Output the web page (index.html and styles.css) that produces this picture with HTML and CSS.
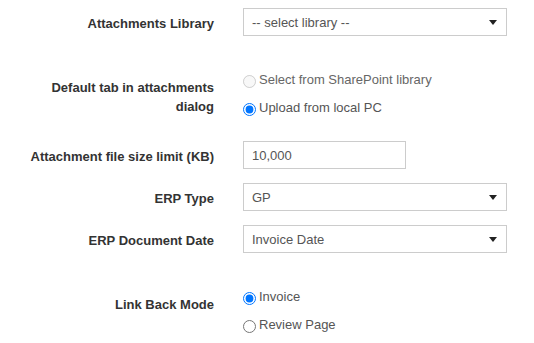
FILE: index.html
```html
<!DOCTYPE html>
<html lang="en">
<head>
    <meta charset="UTF-8">
    <title>Attachment Settings</title>
    <link rel="stylesheet" href="styles.css">
</head>
<body>
    <form class="settings">
        <div class="row">
            <label class="field-label" for="library">Attachments Library</label>
            <div class="select-wrap">
                <select id="library" class="control">
                    <option>-- select library --</option>
                </select>
            </div>
        </div>

        <div class="row spaced">
            <div class="field-label tall">Default tab in attachments dialog</div>
            <div class="radio-group">
                <label class="radio disabled"><input type="radio" name="tab" disabled>Select from SharePoint library</label>
                <label class="radio"><input type="radio" name="tab" checked>Upload from local PC</label>
            </div>
        </div>

        <div class="row">
            <label class="field-label" for="sizeLimit">Attachment file size limit (KB)</label>
            <input type="text" id="sizeLimit" class="control short" value="10,000">
        </div>

        <div class="row">
            <label class="field-label" for="erpType">ERP Type</label>
            <div class="select-wrap">
                <select id="erpType" class="control">
                    <option>GP</option>
                </select>
            </div>
        </div>

        <div class="row">
            <label class="field-label" for="erpDate">ERP Document Date</label>
            <div class="select-wrap">
                <select id="erpDate" class="control">
                    <option>Invoice Date</option>
                </select>
            </div>
        </div>

        <div class="row spaced">
            <div class="field-label tall">Link Back Mode</div>
            <div class="radio-group">
                <label class="radio"><input type="radio" name="linkBack" checked>Invoice</label>
                <label class="radio"><input type="radio" name="linkBack">Review Page</label>
            </div>
        </div>
    </form>
</body>
</html>
```

FILE: styles.css
```css
body {
    margin: 0;
    background: #ffffff;
    font-family: "Liberation Sans", Arial, sans-serif;
    font-size: 13px;
    color: #333;
}
.settings {
    display: flex;
    flex-direction: column;
    padding: 8px 0 0 24px;
}
.row {
    display: flex;
    align-items: flex-start;
    gap: 29px;
    margin-bottom: 14px;
}
.row.spaced {
    margin-top: 20px;
    margin-bottom: 23px;
}
.field-label {
    flex: 0 0 190px;
    text-align: right;
    font-weight: bold;
    line-height: 20px;
    padding-top: 6px;
    color: #333;
}
.field-label.tall {
    line-height: 19px;
    padding-top: 8px;
}
.control {
    box-sizing: border-box;
    height: 28px;
    border: 1px solid #ccc;
    border-radius: 0;
    background: #fff;
    color: #555;
    font-family: inherit;
    font-size: 13px;
    padding: 0 8px;
    margin: 0;
    outline: none;
}
.short {
    width: 163px;
}
.select-wrap {
    position: relative;
    width: 264px;
}
.select-wrap select {
    width: 100%;
    -webkit-appearance: none;
    appearance: none;
}
.select-wrap::after {
    content: "";
    position: absolute;
    right: 10px;
    top: 12px;
    border-left: 4px solid transparent;
    border-right: 4px solid transparent;
    border-top: 5px solid #222;
    pointer-events: none;
}
.radio-group {
    display: flex;
    flex-direction: column;
    gap: 8px;
}
.radio {
    display: flex;
    align-items: flex-start;
    height: 20px;
    line-height: 20px;
    color: #555;
}
.radio input {
    flex: none;
    width: 13px;
    height: 13px;
    margin: 5px 3px 0 0;
}
.radio.disabled {
    color: #666;
}
```
